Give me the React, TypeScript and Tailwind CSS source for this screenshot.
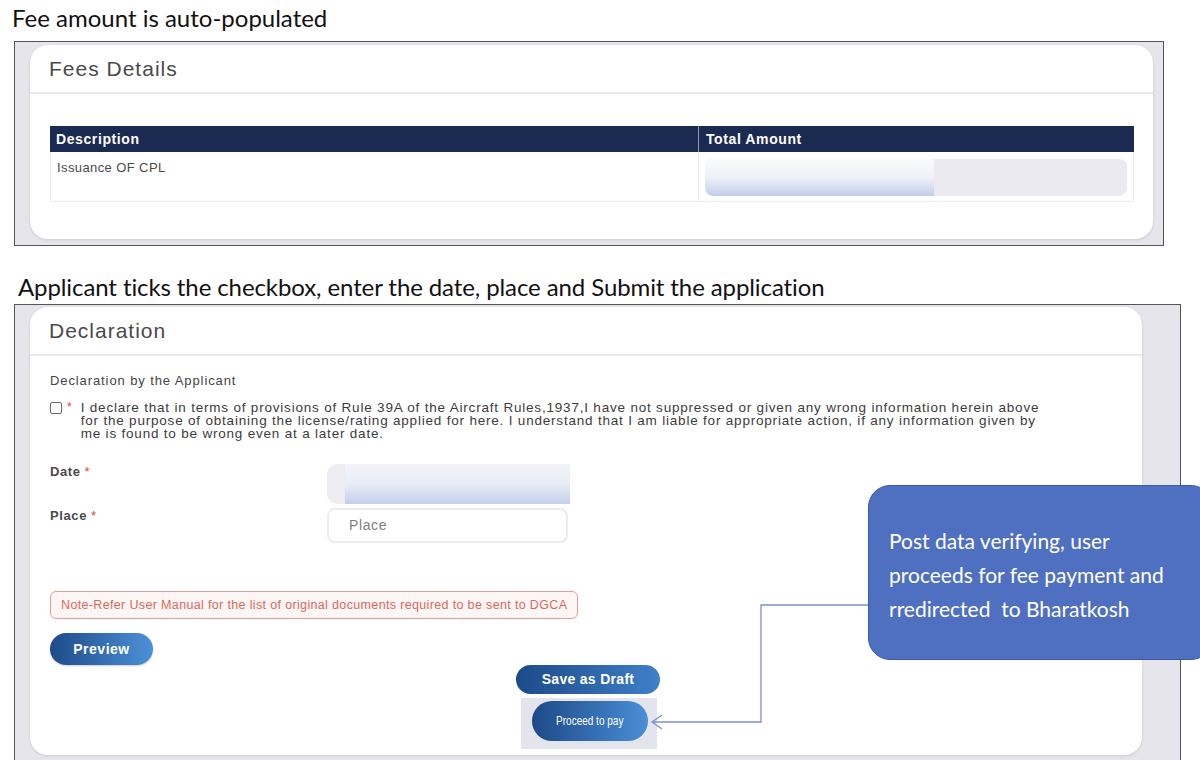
import React from "react";

const slideFont = "font-['Lato','Open_Sans',sans-serif]";

function CardHeader({ title }: { title: string }) {
  return (
    <div className="h-[49px] border-b-2 border-[#ebe9ef] pl-[19px] flex items-center">
      <span className="text-[21px] tracking-[1px] text-[#4a4a4a]">{title}</span>
    </div>
  );
}

function Req() {
  return <span className="text-[#e2453c] font-normal ml-[4px]">*</span>;
}

export default function App() {
  return (
    <div className="relative w-[1200px] h-[760px] overflow-hidden bg-white font-['Liberation_Sans',Arial,sans-serif]">
      {/* Slide caption 1 */}
      <h2 className={`${slideFont} pl-[12px] pt-[3px] h-[41px] text-[24px] leading-[30px] text-[#111]`}>
        Fee amount is auto-populated
      </h2>

      {/* Fees details screenshot */}
      <div className="ml-[14px] w-[1150px] h-[205px] border border-[#555] bg-[#e6e5ec] pl-[15px] pr-[10px] pt-[3px] pb-[6px]">
        <div className="h-full bg-white rounded-[18px] shadow-[0_1px_3px_rgba(0,0,0,0.12)]">
          <CardHeader title="Fees Details" />
          <div className="pl-[20px] pr-[19px] pt-[32px]">
            <div className="grid grid-cols-[649px_1fr]">
              <div className="h-[26px] bg-[#1b2a50] text-white font-bold text-[14px] tracking-[0.6px] pl-[6px] flex items-center border-r border-[#8d97ad]">
                Description
              </div>
              <div className="h-[26px] bg-[#1b2a50] text-white font-bold text-[14px] tracking-[0.6px] pl-[7px] flex items-center">
                Total Amount
              </div>
              <div className="h-[50px] border-l border-b border-r border-[#ececf0] pl-[6px] pt-[6px] text-[13px] tracking-[0.4px] text-[#4a4a4a]">
                Issuance OF CPL
              </div>
              <div className="h-[50px] border-b border-r border-[#ececf0] pl-[6px] pr-[6px] pt-[7px]">
                <div className="h-[37px] rounded-[8px] bg-[#ebeaf0] flex overflow-hidden">
                  <div className="w-[229px] h-full rounded-l-[8px] bg-linear-to-b from-[#fbfbfd] via-[#eef1f7] to-[#c2cfe8]" />
                </div>
              </div>
            </div>
          </div>
        </div>
      </div>

      {/* Slide caption 2 */}
      <h2 className={`${slideFont} pl-[18px] pt-[26px] h-[58px] text-[24px] leading-[30px] tracking-[-0.1px] text-[#111]`}>
        Applicant ticks the checkbox, enter the date, place and Submit the application
      </h2>

      {/* Declaration screenshot */}
      <div className="ml-[14px] w-[1167px] h-[470px] border border-[#555] bg-[#e6e5ec] pl-[15px] pr-[38px] pt-[2px]">
        <div className="h-[448px] bg-white rounded-[18px] shadow-[0_1px_3px_rgba(0,0,0,0.12)]">
          <CardHeader title="Declaration" />
          <div className="pl-[20px] text-[#444]">
            <p className="pt-[17px] text-[13px] leading-[16px] tracking-[0.9px]">Declaration by the Applicant</p>

            <div className="mt-[12px] flex items-start">
              <span className="mt-[1px] w-[12px] h-[12px] rounded-[2px] border border-[#6b6b6b] bg-white shrink-0" />
              <span className="ml-[5px] text-[#e2453c] text-[12px] leading-[12px]">*</span>
              <p className="ml-[9px] text-[13.5px] leading-[13px] tracking-[0.8px] text-[#3c3c3c]">
                I declare that in terms of provisions of Rule 39A of the Aircraft Rules,1937,I have not suppressed or given any wrong information herein above
                <br />
                for the purpose of obtaining the license/rating applied for here. I understand that I am liable for appropriate action, if any information given by
                <br />
                me is found to be wrong even at a later date.
              </p>
            </div>

            <div className="mt-[24px] flex">
              <label className="w-[277px] pt-[1px] text-[13px] leading-[14px] font-bold tracking-[0.6px] text-[#4a4a4a]">
                Date<Req />
              </label>
              <div className="w-[243px] h-[40px] flex">
                <div className="w-[18px] h-full rounded-l-[10px] bg-[#ececf1]" />
                <div className="flex-1 h-full bg-linear-to-b from-[#f4f4f8] via-[#e8ecf5] to-[#c3d0ea]" />
              </div>
            </div>

            <div className="mt-[4px] flex">
              <label className="w-[277px] pt-[1px] text-[13px] leading-[14px] font-bold tracking-[0.6px] text-[#4a4a4a]">
                Place<Req />
              </label>
              <div className="w-[241px] h-[35px] rounded-[8px] border-2 border-[#ececf0] pl-[20px] flex items-center text-[14px] tracking-[0.6px] text-[#808080]">
                Place
              </div>
            </div>

            <div className="mt-[48px] w-[528px] h-[28px] rounded-[6px] border border-[#e79c95] bg-[#fdf6f5] pl-[10px] flex items-center text-[12.5px] tracking-[0.35px] text-[#d8695e]">
              Note-Refer User Manual for the list of original documents required to be sent to DGCA
            </div>

            <button className="mt-[14px] w-[103px] h-[32px] rounded-full bg-linear-to-r from-[#1f4b8a] to-[#4d91d9] text-white font-bold text-[14px] tracking-[0.5px] shadow-[0_1px_2px_rgba(0,0,0,0.2)]">
              Preview
            </button>

            <div className="ml-[466px]">
              <button className="block w-[144px] h-[29px] rounded-full bg-linear-to-r from-[#1d4a88] to-[#3f80c9] text-white font-bold text-[14px] tracking-[0.3px]">
                Save as Draft
              </button>
              <div className="mt-[4px] ml-[5px] w-[136px] h-[51px] bg-[#e4e4ec] pl-[11px] pt-[3px]">
                <button className="w-[116px] h-[40px] rounded-full bg-linear-to-r from-[#1d4a88] to-[#4a8fd8] text-white text-[13px] flex items-center justify-center">
                  <span className="inline-block scale-x-[0.77]">Proceed to pay</span>
                </button>
              </div>
            </div>
          </div>
        </div>
      </div>

      {/* Annotation connector */}
      <svg className="absolute left-0 top-0 pointer-events-none" width="1200" height="760">
        <polyline points="870,605 761,605 761,722 652,722" fill="none" stroke="#7b8ed6" strokeWidth="1.3" />
        <polyline points="662,715 652,722 662,729" fill="none" stroke="#7b8ed6" strokeWidth="1.3" />
      </svg>

      {/* Annotation callout */}
      <div
        className={`${slideFont} absolute left-[868px] top-[485px] w-[345px] h-[175px] rounded-[22px] border border-[#3d5aa6] bg-[#4f6fc0] pl-[20px] pt-[38px] text-white text-[21px] leading-[34px]`}
      >
        Post data verifying, user
        <br />
        proceeds for fee payment and
        <br />
        rredirected&nbsp; to Bharatkosh
      </div>
    </div>
  );
}
